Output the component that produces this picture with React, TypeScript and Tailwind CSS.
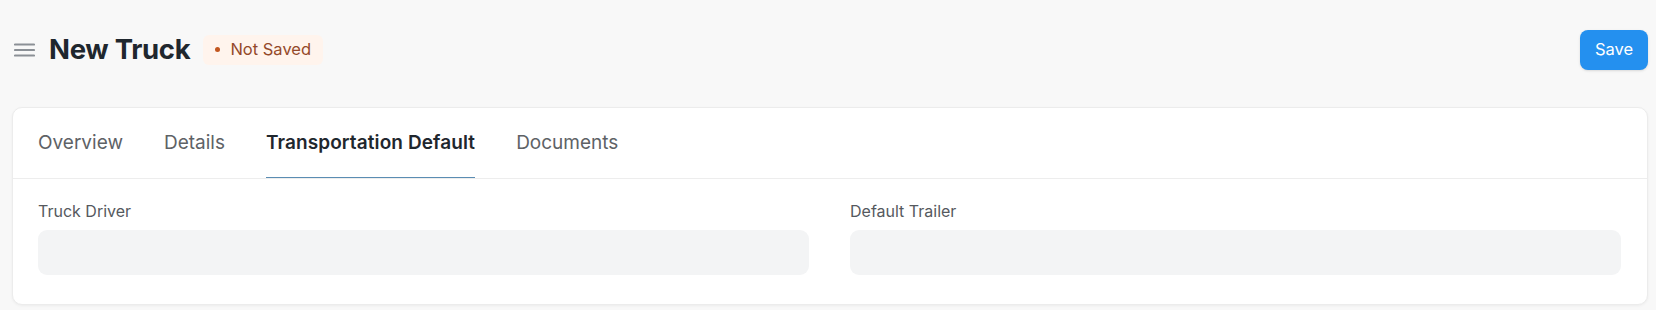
import React from 'react';

const tabs = ['Overview', 'Details', 'Transportation Default', 'Documents'];

const Field: React.FC<{ label: string }> = ({ label }) => (
  <div className="flex flex-col">
    <label className="text-[16px] leading-5 text-[#55595e] mb-[9px]">{label}</label>
    <div className="h-[45px] rounded-[9px] bg-[#f3f4f5]" />
  </div>
);

const App: React.FC = () => {
  const active = 'Transportation Default';
  return (
    <div className="min-h-[310px] bg-[#f8f8f8] font-['Inter',sans-serif] pb-[4px]">
      {/* Page header */}
      <header className="flex items-center justify-between pl-[14px] pr-[8px] pt-[29px] pb-[37px]">
        <div className="flex items-center">
          <svg width="21" height="14" viewBox="0 0 21 14" className="text-[#8b9096]">
            <path d="M1 1.5h19M1 7h19M1 12.5h19" stroke="currentColor" strokeWidth="2.2" strokeLinecap="round" />
          </svg>
          <h1 className="ml-[14px] text-[27.5px] font-bold tracking-[-0.3px] text-[#1f272e]">New Truck</h1>
          <span className="ml-[13px] flex h-[30px] items-center gap-[10px] rounded-[6px] bg-[#fff4ed] px-[12px] text-[16.5px] text-[#94492a]">
            <span className="h-[5px] w-[5px] rounded-full bg-[#c2561f]" />
            Not Saved
          </span>
        </div>
        <button className="h-[40px] w-[68px] rounded-[8px] bg-[#2490ef] text-[16.5px] text-white shadow-sm">
          Save
        </button>
      </header>

      {/* Form card */}
      <div className="ml-[12px] mr-[8px] rounded-[10px] border border-[#ececec] bg-white shadow-[0_1px_3px_rgba(0,0,0,0.05)]">
        <nav className="flex h-[71px] gap-[41px] border-b border-[#ededed] pl-[25px]">
          {tabs.map((t) => (
            <button
              key={t}
              className={
                t === active
                  ? 'flex h-full items-center border-b border-[#5b8db3] text-[19px] font-semibold tracking-[0.1px] text-[#1f272e]'
                  : 'flex h-full items-center border-b border-transparent text-[19px] text-[#5e6266]'
              }
            >
              {t}
            </button>
          ))}
        </nav>
        <div className="grid grid-cols-2 gap-[41px] pl-[25px] pr-[26px] pt-[22px] pb-[29px]">
          <Field label="Truck Driver" />
          <Field label="Default Trailer" />
        </div>
      </div>
    </div>
  );
};

export default App;
